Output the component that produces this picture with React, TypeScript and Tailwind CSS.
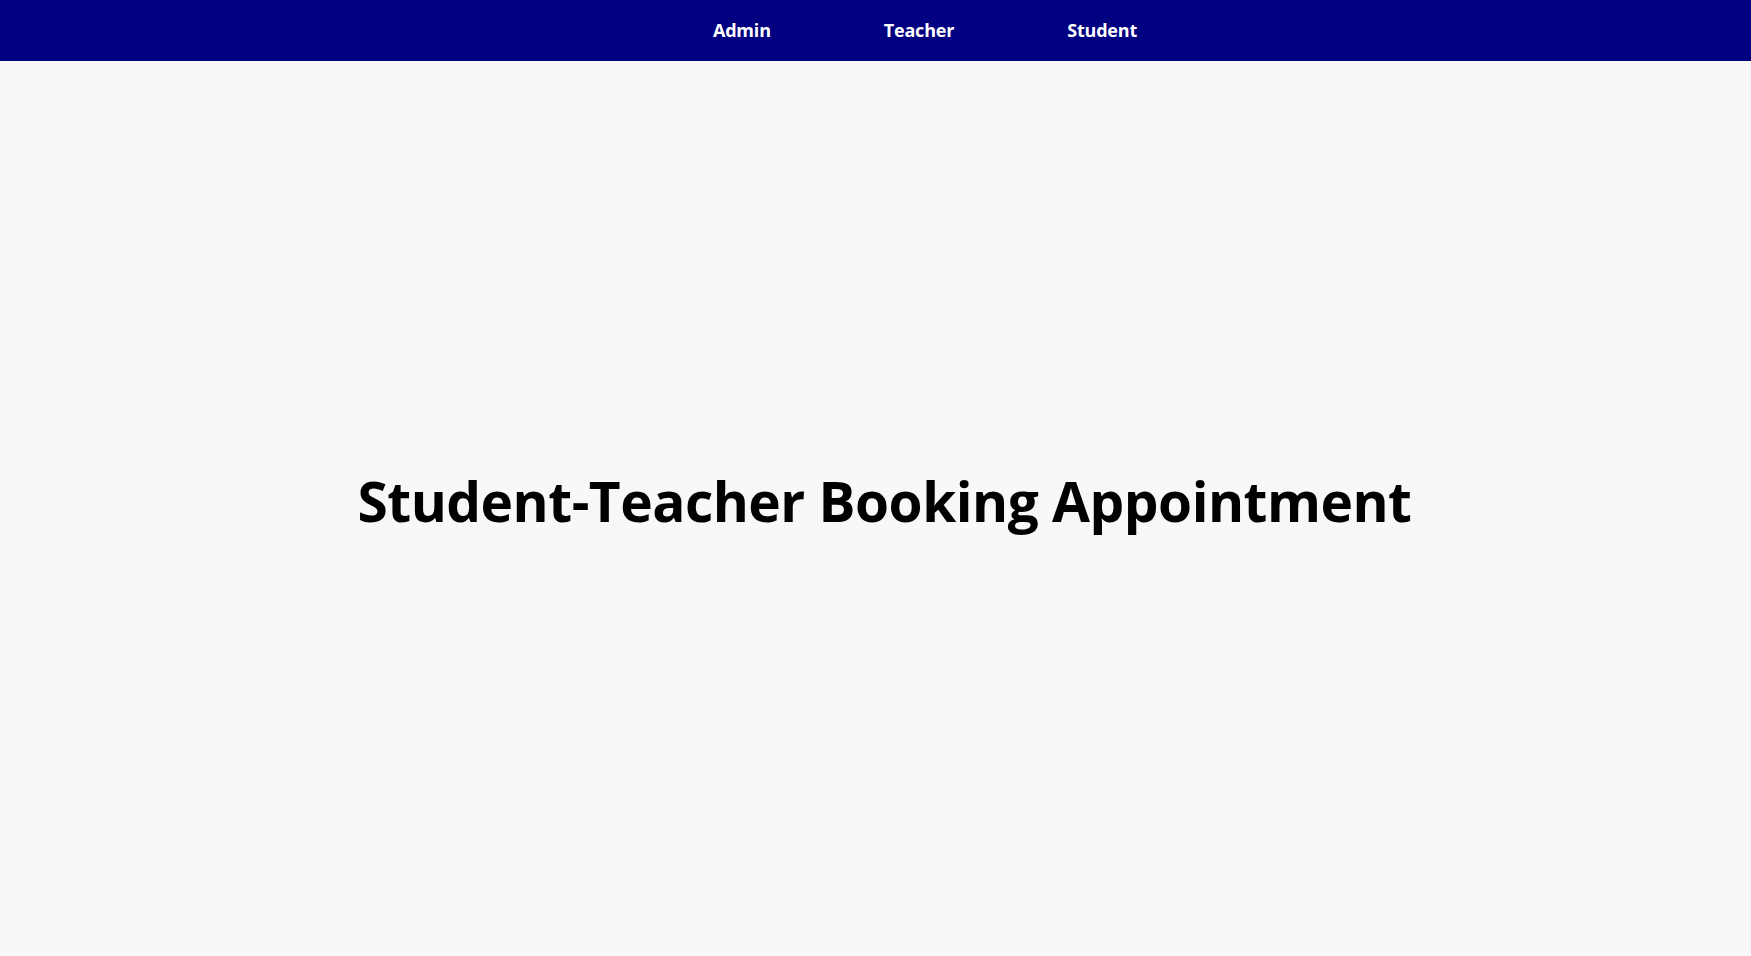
import React from 'react';

const links = ['Admin', 'Teacher', 'Student'];

const App: React.FC = () => {
  return (
    <div className="min-h-screen flex flex-col bg-[#f8f8f8] font-['Open_Sans',sans-serif]">
      <nav className="h-[61px] bg-[#000080] flex items-center justify-center pl-[99px] gap-[113px]">
        {links.map((link) => (
          <a key={link} href="#" className="text-white font-bold text-[18px] tracking-[-0.2px]">
            {link}
          </a>
        ))}
      </nav>

      <main className="flex-1 flex items-center justify-center pl-[18px]">
        <h1 className="text-[55px] font-bold text-black tracking-[-0.5px] -mt-[14px]">
          Student-Teacher Booking Appointment
        </h1>
      </main>
    </div>
  );
};

export default App;
